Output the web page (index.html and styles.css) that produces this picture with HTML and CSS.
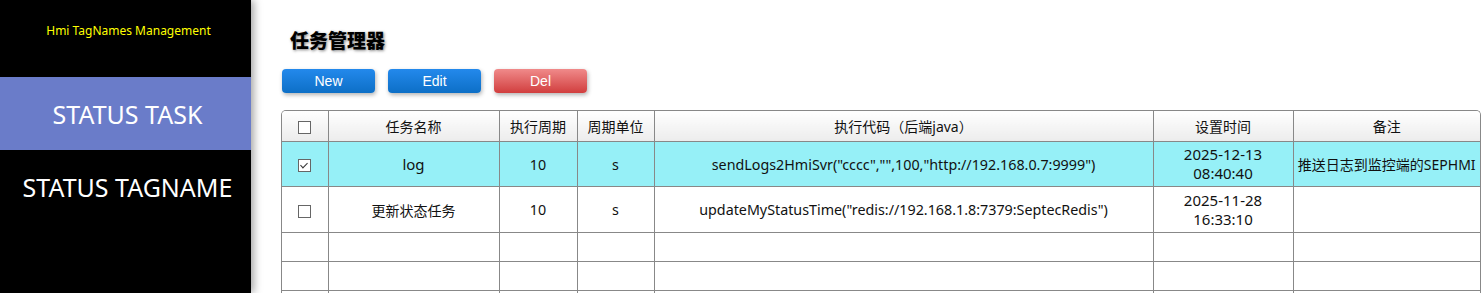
FILE: index.html
```html
<!DOCTYPE html>
<html lang="zh">

<head>
    <meta charset="UTF-8">
    <meta name="viewport" content="width=device-width, initial-scale=1.0">
    <title>任务管理器</title>
    <link rel="stylesheet" href="styles.css">
</head>

<body>
    <div class="layout">

        <!-- Sidebar menu -->
        <div class="sidebar">
            <div class="brand">Hmi TagNames Management</div>
            <a href="#" class="nav-item active">STATUS TASK</a>
            <a href="#" class="nav-item">STATUS TAGNAME</a>
        </div>

        <!-- Main area -->
        <div class="main">
            <h2 class="page-title">任务管理器</h2>

            <div class="toolbar">
                <button class="btn btn-blue">New</button>
                <button class="btn btn-blue">Edit</button>
                <button class="btn btn-red">Del</button>
            </div>

            <div class="table-wrap">
                <table class="task-table">
                    <colgroup>
                        <col style="width: 46px">
                        <col style="width: 171px">
                        <col style="width: 78px">
                        <col style="width: 77px">
                        <col style="width: 499px">
                        <col style="width: 140px">
                        <col>
                    </colgroup>
                    <thead>
                        <tr>
                            <th><span class="check"></span></th>
                            <th>任务名称</th>
                            <th>执行周期</th>
                            <th>周期单位</th>
                            <th>执行代码（后端java）</th>
                            <th>设置时间</th>
                            <th>备注</th>
                        </tr>
                    </thead>
                    <tbody>
                        <tr class="selected">
                            <td><span class="check checked"></span></td>
                            <td class="big">log</td>
                            <td>10</td>
                            <td>s</td>
                            <td>sendLogs2HmiSvr("cccc","",100,"http://192.168.0.7:9999")</td>
                            <td class="time">2025-12-13 08:40:40</td>
                            <td class="note">推送日志到监控端的SEPHMI</td>
                        </tr>
                        <tr class="tall">
                            <td><span class="check"></span></td>
                            <td class="small">更新状态任务</td>
                            <td>10</td>
                            <td>s</td>
                            <td>updateMyStatusTime("redis://192.168.1.8:7379:SeptecRedis")</td>
                            <td class="time">2025-11-28 16:33:10</td>
                            <td></td>
                        </tr>
                        <tr class="empty"><td></td><td></td><td></td><td></td><td></td><td></td><td></td></tr>
                        <tr class="empty"><td></td><td></td><td></td><td></td><td></td><td></td><td></td></tr>
                        <tr class="empty"><td></td><td></td><td></td><td></td><td></td><td></td><td></td></tr>
                    </tbody>
                </table>
            </div>
        </div>
    </div>
</body>
</html>
```

FILE: styles.css
```css
body {
    margin: 0;
    font-family: "Noto Sans", "Noto Sans CJK SC", sans-serif;
    background-color: white;
    overflow: hidden;
}

.layout {
    display: flex;
    height: 293px;
    overflow: hidden;
}

/* Sidebar */
.sidebar {
    width: 251px;
    flex-shrink: 0;
    background-color: black;
    box-shadow: 3px 0 8px rgba(0, 0, 0, 0.35);
    display: flex;
    flex-direction: column;
    position: relative;
    z-index: 1;
}

.brand {
    color: #ffff00;
    font-size: 12px;
    text-align: center;
    padding: 22px 0 0 6px;
    height: 55px;
}

.nav-item {
    display: flex;
    align-items: center;
    justify-content: center;
    height: 73px;
    color: white;
    font-size: 25px;
    text-decoration: none;
    padding-left: 4px;
}

.nav-item.active {
    background-color: rgb(106, 124, 201);
}

/* Main */
.main {
    flex: 1;
    padding: 0 0 0 30px;
    overflow: hidden;
}

.page-title {
    margin: 27px 0 0 9px;
    font-size: 19px;
    font-weight: 900;
    line-height: 26px;
    text-shadow: 1px 1px 3px rgba(0, 0, 0, 0.5);
    font-family: "Noto Sans CJK SC", sans-serif;
}

.toolbar {
    display: flex;
    gap: 13px;
    margin: 16px 0 0 1px;
}

.btn {
    width: 93px;
    height: 24px;
    border: none;
    border-radius: 4px;
    color: white;
    font-family: "Liberation Sans", Arial, sans-serif;
    font-size: 14px;
    box-shadow: 1px 2px 4px rgba(0, 0, 0, 0.3);
    cursor: pointer;
}

.btn-blue {
    background: linear-gradient(#2389ec, #0d6fc6);
}

.btn-red {
    background: linear-gradient(#f08a8a, #d13e3e);
}

/* Table */
.table-wrap {
    width: 1198px;
    margin-top: 17px;
    border: 1px solid #888;
    border-bottom: none;
    border-radius: 5px 5px 0 0;
    overflow: hidden;
}

.task-table {
    width: 100%;
    border-collapse: collapse;
    table-layout: fixed;
    font-size: 14.3px;
    color: #111;
}

.task-table th, .task-table td {
    border: 1px solid #888;
    text-align: center;
    padding: 0 2px;
}

.task-table th:first-child, .task-table td:first-child {
    border-left: none;
}

.task-table th:last-child, .task-table td:last-child {
    border-right: none;
}

.task-table thead th {
    border-top: none;
    height: 30px;
    font-weight: normal;
    font-size: 14px;
    background: linear-gradient(#ffffff, #ececec);
}

.task-table tbody tr {
    height: 45px;
}

.task-table tbody tr.tall {
    height: 46px;
}

.task-table tbody tr.empty {
    height: 29px;
}

.task-table tr.selected td {
    background-color: rgb(150, 240, 247);
}

.task-table td.big {
    font-size: 15px;
}

.task-table td.small {
    font-size: 14px;
}

.task-table td.time {
    font-size: 15px;
    line-height: 19px;
    padding: 0 24px;
}

.task-table td.note {
    font-size: 14px;
    white-space: nowrap;
    padding: 0;
}

.check {
    display: inline-block;
    width: 11px;
    height: 11px;
    border: 1px solid #666;
    background: white;
    vertical-align: middle;
    position: relative;
}

.check.checked::after {
    content: "";
    position: absolute;
    left: 3px;
    top: 1px;
    width: 3px;
    height: 6px;
    border: solid #333;
    border-width: 0 1px 1px 0;
    transform: rotate(45deg);
}
```
